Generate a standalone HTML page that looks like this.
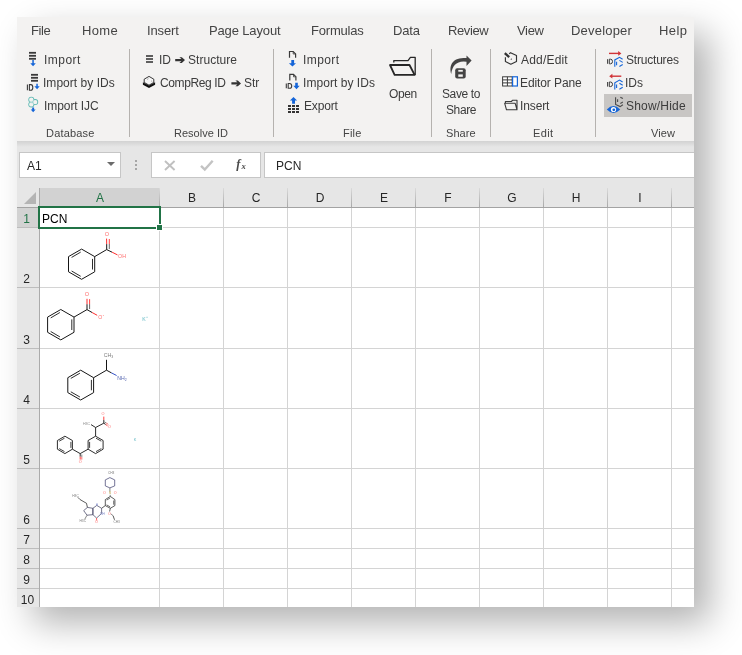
<!DOCTYPE html>
<html><head><meta charset="utf-8">
<style>
html,body{margin:0;padding:0;background:#fff;width:742px;height:655px;overflow:hidden;}
body{position:relative;font-family:"Liberation Sans",sans-serif;}
.t{position:absolute;white-space:pre;font-family:"Liberation Sans",sans-serif;will-change:transform;}
.a{position:absolute;}
</style></head><body>
<div class="a" style="left:17px;top:17px;width:677px;height:590px;background:#fff;box-shadow:16px 16px 34px rgba(0,0,0,0.3);"></div>
<div class="a" style="left:17px;top:17px;width:677px;height:124px;background:#f3f2f1;"></div>
<div class="a" style="left:129px;top:49px;width:1px;height:88px;background:#b5b2af;"></div>
<div class="a" style="left:273px;top:49px;width:1px;height:88px;background:#b5b2af;"></div>
<div class="a" style="left:431px;top:49px;width:1px;height:88px;background:#b5b2af;"></div>
<div class="a" style="left:490px;top:49px;width:1px;height:88px;background:#b5b2af;"></div>
<div class="a" style="left:595px;top:49px;width:1px;height:88px;background:#b5b2af;"></div>
<div class="a" style="left:604px;top:94px;width:88px;height:23px;background:#c8c6c4;"></div>
<div class="a" style="left:17px;top:141px;width:677px;height:66px;background:#e6e6e6;"></div>
<div class="a" style="left:17px;top:141px;width:677px;height:6px;background:linear-gradient(#d2d2d2,#e6e6e6);"></div>
<div class="a" style="left:19px;top:152px;width:101px;height:25px;background:#fff;border:1px solid #c6c6c6;box-sizing:border-box;width:102px;height:26px;"></div>
<div class="a" style="left:107px;top:162px;width:0;height:0;border-left:4px solid transparent;border-right:4px solid transparent;border-top:4px solid #6b6b6b;"></div>
<div class="a" style="left:135px;top:160px;width:2px;height:2px;background:#a6a6a6;"></div>
<div class="a" style="left:135px;top:164px;width:2px;height:2px;background:#a6a6a6;"></div>
<div class="a" style="left:135px;top:168px;width:2px;height:2px;background:#a6a6a6;"></div>
<div class="a" style="left:151px;top:152px;width:110px;height:26px;background:#fff;border:1px solid #c6c6c6;box-sizing:border-box;"></div>
<div class="a" style="left:264px;top:152px;width:430px;height:26px;background:#fff;border:1px solid #c6c6c6;border-right:none;box-sizing:border-box;"></div>
<div class="a" style="left:39px;top:188px;width:121px;height:19px;background:#d2d2d2;"></div>
<div class="a" style="left:17px;top:207px;width:22px;height:400px;background:#e6e6e6;"></div>
<div class="a" style="left:17px;top:207px;width:22px;height:21px;background:#d2d2d2;"></div>
<div class="a" style="left:40px;top:208px;width:654px;height:399px;background:#fff;"></div>
<div class="a" style="left:17px;top:207px;width:677px;height:1px;background:#a3a3a3;"></div>
<div class="a" style="left:39px;top:188px;width:1px;height:419px;background:#ababab;"></div>
<div class="a" style="left:159px;top:188px;width:1px;height:19px;background:linear-gradient(#dadada,#a8a8a8);"></div>
<div class="a" style="left:159px;top:208px;width:1px;height:399px;background:#d4d4d4;"></div>
<div class="a" style="left:223px;top:188px;width:1px;height:19px;background:linear-gradient(#dadada,#a8a8a8);"></div>
<div class="a" style="left:223px;top:208px;width:1px;height:399px;background:#d4d4d4;"></div>
<div class="a" style="left:287px;top:188px;width:1px;height:19px;background:linear-gradient(#dadada,#a8a8a8);"></div>
<div class="a" style="left:287px;top:208px;width:1px;height:399px;background:#d4d4d4;"></div>
<div class="a" style="left:351px;top:188px;width:1px;height:19px;background:linear-gradient(#dadada,#a8a8a8);"></div>
<div class="a" style="left:351px;top:208px;width:1px;height:399px;background:#d4d4d4;"></div>
<div class="a" style="left:415px;top:188px;width:1px;height:19px;background:linear-gradient(#dadada,#a8a8a8);"></div>
<div class="a" style="left:415px;top:208px;width:1px;height:399px;background:#d4d4d4;"></div>
<div class="a" style="left:479px;top:188px;width:1px;height:19px;background:linear-gradient(#dadada,#a8a8a8);"></div>
<div class="a" style="left:479px;top:208px;width:1px;height:399px;background:#d4d4d4;"></div>
<div class="a" style="left:543px;top:188px;width:1px;height:19px;background:linear-gradient(#dadada,#a8a8a8);"></div>
<div class="a" style="left:543px;top:208px;width:1px;height:399px;background:#d4d4d4;"></div>
<div class="a" style="left:607px;top:188px;width:1px;height:19px;background:linear-gradient(#dadada,#a8a8a8);"></div>
<div class="a" style="left:607px;top:208px;width:1px;height:399px;background:#d4d4d4;"></div>
<div class="a" style="left:671px;top:188px;width:1px;height:19px;background:linear-gradient(#dadada,#a8a8a8);"></div>
<div class="a" style="left:671px;top:208px;width:1px;height:399px;background:#d4d4d4;"></div>
<div class="a" style="left:17px;top:227px;width:22px;height:1px;background:#bdbdbd;"></div>
<div class="a" style="left:40px;top:227px;width:654px;height:1px;background:#d4d4d4;"></div>
<div class="a" style="left:17px;top:287px;width:22px;height:1px;background:#bdbdbd;"></div>
<div class="a" style="left:40px;top:287px;width:654px;height:1px;background:#d4d4d4;"></div>
<div class="a" style="left:17px;top:348px;width:22px;height:1px;background:#bdbdbd;"></div>
<div class="a" style="left:40px;top:348px;width:654px;height:1px;background:#d4d4d4;"></div>
<div class="a" style="left:17px;top:408px;width:22px;height:1px;background:#bdbdbd;"></div>
<div class="a" style="left:40px;top:408px;width:654px;height:1px;background:#d4d4d4;"></div>
<div class="a" style="left:17px;top:468px;width:22px;height:1px;background:#bdbdbd;"></div>
<div class="a" style="left:40px;top:468px;width:654px;height:1px;background:#d4d4d4;"></div>
<div class="a" style="left:17px;top:528px;width:22px;height:1px;background:#bdbdbd;"></div>
<div class="a" style="left:40px;top:528px;width:654px;height:1px;background:#d4d4d4;"></div>
<div class="a" style="left:17px;top:548px;width:22px;height:1px;background:#bdbdbd;"></div>
<div class="a" style="left:40px;top:548px;width:654px;height:1px;background:#d4d4d4;"></div>
<div class="a" style="left:17px;top:568px;width:22px;height:1px;background:#bdbdbd;"></div>
<div class="a" style="left:40px;top:568px;width:654px;height:1px;background:#d4d4d4;"></div>
<div class="a" style="left:17px;top:588px;width:22px;height:1px;background:#bdbdbd;"></div>
<div class="a" style="left:40px;top:588px;width:654px;height:1px;background:#d4d4d4;"></div>
<svg class="a" style="left:17px;top:188px" width="22" height="19"><polygon points="7,16 19,16 19,4" fill="#b4b4b4"/></svg>
<div class="a" style="left:38px;top:206px;width:123px;height:2px;background:#217346;"></div>
<div class="a" style="left:38px;top:206px;width:2px;height:23px;background:#217346;"></div>
<div class="a" style="left:159px;top:206px;width:2px;height:18px;background:#217346;"></div>
<div class="a" style="left:38px;top:227px;width:118px;height:2px;background:#217346;"></div>
<div class="a" style="left:157px;top:225px;width:5px;height:5px;background:#217346;border:1px solid #fff;box-sizing:content-box;left:156px;top:224px;"></div>
<div class="t" style="left:40px;top:192px;width:120px;text-align:center;font-size:12px;line-height:12px;color:#217346">A</div>
<div class="t" style="left:160px;top:192px;width:64px;text-align:center;font-size:12px;line-height:12px;color:#262626">B</div>
<div class="t" style="left:224px;top:192px;width:64px;text-align:center;font-size:12px;line-height:12px;color:#262626">C</div>
<div class="t" style="left:288px;top:192px;width:64px;text-align:center;font-size:12px;line-height:12px;color:#262626">D</div>
<div class="t" style="left:352px;top:192px;width:64px;text-align:center;font-size:12px;line-height:12px;color:#262626">E</div>
<div class="t" style="left:416px;top:192px;width:64px;text-align:center;font-size:12px;line-height:12px;color:#262626">F</div>
<div class="t" style="left:480px;top:192px;width:64px;text-align:center;font-size:12px;line-height:12px;color:#262626">G</div>
<div class="t" style="left:544px;top:192px;width:64px;text-align:center;font-size:12px;line-height:12px;color:#262626">H</div>
<div class="t" style="left:608px;top:192px;width:64px;text-align:center;font-size:12px;line-height:12px;color:#262626">I</div>
<div class="t" style="left:16px;top:213px;width:21px;text-align:center;font-size:12px;line-height:12px;color:#217346">1</div>
<div class="t" style="left:16px;top:273px;width:21px;text-align:center;font-size:12px;line-height:12px;color:#262626">2</div>
<div class="t" style="left:16px;top:334px;width:21px;text-align:center;font-size:12px;line-height:12px;color:#262626">3</div>
<div class="t" style="left:16px;top:394px;width:21px;text-align:center;font-size:12px;line-height:12px;color:#262626">4</div>
<div class="t" style="left:16px;top:454px;width:21px;text-align:center;font-size:12px;line-height:12px;color:#262626">5</div>
<div class="t" style="left:16px;top:514px;width:21px;text-align:center;font-size:12px;line-height:12px;color:#262626">6</div>
<div class="t" style="left:16px;top:534px;width:21px;text-align:center;font-size:12px;line-height:12px;color:#262626">7</div>
<div class="t" style="left:16px;top:554px;width:21px;text-align:center;font-size:12px;line-height:12px;color:#262626">8</div>
<div class="t" style="left:16px;top:574px;width:21px;text-align:center;font-size:12px;line-height:12px;color:#262626">9</div>
<div class="t" style="left:17px;top:594px;width:21px;text-align:center;font-size:12px;line-height:12px;color:#262626">10</div>
<div class="t" style="left:30.5px;top:23.8px;font-size:13px;line-height:13px;color:#444444;letter-spacing:-0.4px">File</div>
<div class="t" style="left:82.3px;top:23.8px;font-size:13px;line-height:13px;color:#444444;letter-spacing:0.33px">Home</div>
<div class="t" style="left:146.5px;top:23.8px;font-size:13px;line-height:13px;color:#444444;letter-spacing:-0.12px">Insert</div>
<div class="t" style="left:209.1px;top:23.8px;font-size:13px;line-height:13px;color:#444444;letter-spacing:-0.14px">Page Layout</div>
<div class="t" style="left:311.0px;top:23.8px;font-size:13px;line-height:13px;color:#444444;letter-spacing:-0.19px">Formulas</div>
<div class="t" style="left:392.7px;top:23.8px;font-size:13px;line-height:13px;color:#444444;letter-spacing:-0.13px">Data</div>
<div class="t" style="left:448.2px;top:23.8px;font-size:13px;line-height:13px;color:#444444;letter-spacing:-0.4px">Review</div>
<div class="t" style="left:517.0px;top:23.8px;font-size:13px;line-height:13px;color:#444444;letter-spacing:-0.33px">View</div>
<div class="t" style="left:571.2px;top:23.8px;font-size:13px;line-height:13px;color:#444444;letter-spacing:0.2px">Developer</div>
<div class="t" style="left:658.6px;top:23.8px;font-size:13px;line-height:13px;color:#444444;letter-spacing:0.43px">Help</div>
<div class="t" style="left:43.6px;top:54.0px;font-size:12px;line-height:12px;color:#3c3c3c;letter-spacing:0.46px">Import</div>
<div class="t" style="left:43.1px;top:77.0px;font-size:12px;line-height:12px;color:#3c3c3c;letter-spacing:0.03px">Import by IDs</div>
<div class="t" style="left:43.6px;top:100.0px;font-size:12px;line-height:12px;color:#3c3c3c;letter-spacing:-0.07px">Import IJC</div>
<div class="t" style="left:158.7px;top:54.0px;font-size:12px;line-height:12px;color:#3c3c3c;letter-spacing:0px">ID</div>
<div class="t" style="left:188.1px;top:54.0px;font-size:12px;line-height:12px;color:#3c3c3c;letter-spacing:0.04px">Structure</div>
<div class="t" style="left:160.4px;top:77.0px;font-size:12px;line-height:12px;color:#3c3c3c;letter-spacing:-0.38px">CompReg ID</div>
<div class="t" style="left:243.8px;top:77.0px;font-size:12px;line-height:12px;color:#3c3c3c;letter-spacing:0px">Str</div>
<div class="t" style="left:303.4px;top:54.0px;font-size:12px;line-height:12px;color:#3c3c3c;letter-spacing:0.4px">Import</div>
<div class="t" style="left:303.2px;top:77.0px;font-size:12px;line-height:12px;color:#3c3c3c;letter-spacing:0.05px">Import by IDs</div>
<div class="t" style="left:303.5px;top:100.0px;font-size:12px;line-height:12px;color:#3c3c3c;letter-spacing:-0.16px">Export</div>
<div class="t" style="left:388.6px;top:88.4px;font-size:12px;line-height:12px;color:#3c3c3c;letter-spacing:-0.37px">Open</div>
<div class="t" style="left:441.5px;top:88.4px;font-size:12px;line-height:12px;color:#3c3c3c;letter-spacing:-0.38px">Save to</div>
<div class="t" style="left:446.0px;top:103.8px;font-size:12px;line-height:12px;color:#3c3c3c;letter-spacing:-0.4px">Share</div>
<div class="t" style="left:520.9px;top:54.0px;font-size:12px;line-height:12px;color:#3c3c3c;letter-spacing:0.19px">Add/Edit</div>
<div class="t" style="left:520.2px;top:77.0px;font-size:12px;line-height:12px;color:#3c3c3c;letter-spacing:-0.1px">Editor Pane</div>
<div class="t" style="left:520.4px;top:100.0px;font-size:12px;line-height:12px;color:#3c3c3c;letter-spacing:-0.12px">Insert</div>
<div class="t" style="left:625.5px;top:54.0px;font-size:12px;line-height:12px;color:#3c3c3c;letter-spacing:-0.2px">Structures</div>
<div class="t" style="left:624.7px;top:77.0px;font-size:12px;line-height:12px;color:#3c3c3c;letter-spacing:0px">IDs</div>
<div class="t" style="left:625.7px;top:100.0px;font-size:12px;line-height:12px;color:#3c3c3c;letter-spacing:0.2px">Show/Hide</div>
<div class="t" style="left:46.4px;top:128.0px;font-size:11px;line-height:11px;color:#444444;letter-spacing:0.19px">Database</div>
<div class="t" style="left:173.9px;top:128.0px;font-size:11px;line-height:11px;color:#444444;letter-spacing:0.02px">Resolve ID</div>
<div class="t" style="left:342.6px;top:128.0px;font-size:11px;line-height:11px;color:#444444;letter-spacing:0.23px">File</div>
<div class="t" style="left:445.6px;top:128.0px;font-size:11px;line-height:11px;color:#444444;letter-spacing:0.05px">Share</div>
<div class="t" style="left:532.5px;top:128.0px;font-size:11px;line-height:11px;color:#444444;letter-spacing:0.37px">Edit</div>
<div class="t" style="left:650.6px;top:128.0px;font-size:11px;line-height:11px;color:#444444;letter-spacing:0.13px">View</div>
<div class="t" style="left:26.8px;top:159.9px;font-size:12px;line-height:12px;color:#262626;letter-spacing:0px">A1</div>
<div class="t" style="left:276.0px;top:159.8px;font-size:12px;line-height:12px;color:#262626;letter-spacing:0px">PCN</div>
<div class="t" style="left:42.0px;top:212.9px;font-size:12px;line-height:12px;color:#000000;letter-spacing:0px">PCN</div>

<svg class="a" style="left:0;top:0" width="742" height="655" viewBox="0 0 742 655">
<g id="ribbon-icons">
 <!-- DB Import -->
 <g fill="#3a3a3a"><rect x="29" y="51.9" width="7" height="1.8"/><rect x="29" y="54.9" width="7" height="1.8"/><rect x="29" y="57.9" width="7" height="1.8"/></g>
 <path d="M32.3,60 h1.5 v3.3 h2 l-2.75,3 l-2.75,-3 h2z" fill="#1565d8"/>
 <!-- DB Import by IDs -->
 <g fill="#3a3a3a"><rect x="31" y="73.9" width="7" height="1.8"/><rect x="31" y="76.9" width="7" height="1.8"/><rect x="31" y="79.9" width="7" height="1.8"/></g>
 <g fill="none" stroke="#3a3a3a" stroke-width="1.1"><path d="M27.4,84.6 v5.6"/><path d="M29.4,84.6 h1.4 q2,0 2,2.8 q0,2.8 -2,2.8 h-1.4z"/></g>
 <path d="M36.3,83.8 h1.5 v2.5 h1.9 l-2.65,3 l-2.65,-3 h1.9z" fill="#1565d8"/>
 <!-- IJC -->
 <g fill="#5cb8b2"><circle cx="31.3" cy="99.8" r="3"/><circle cx="31.3" cy="104.4" r="3"/><circle cx="35.2" cy="102.1" r="3"/></g>
 <g fill="#f3f2f1"><circle cx="31.3" cy="99.8" r="2.2"/><circle cx="31.3" cy="104.4" r="2.2"/><circle cx="35.2" cy="102.1" r="2.2"/></g>
 <path d="M29.8,102.1 h4 M32.2,100.6 v3" stroke="#a8d8d4" stroke-width="0.7"/>
 <path d="M32.2,107.6 h1.9 v2 h1.5 l-2.45,2.6 l-2.45,-2.6 h1.5z" fill="#1565d8"/>
 <path d="M175.2,59.050000000000004 H181.4 L179.4,57.2 H181.8 L185,60.1 L181.8,63.0 H179.4 L181.4,61.15 H175.2 Z" fill="#333"/>
 <path d="M231.4,82.35000000000001 H237.4 L235.4,80.5 H237.8 L241,83.4 L237.8,86.30000000000001 H235.4 L237.4,84.45 H231.4 Z" fill="#333"/>
 <!-- Resolve ID: list -->
 <g fill="#3a3a3a"><rect x="146" y="55.2" width="7" height="1.6"/><rect x="146" y="58.2" width="7" height="1.6"/><rect x="146" y="61.2" width="7" height="1.6"/></g>
 <!-- CompReg -->
 <path d="M149,76.4 L153.8,79.2 V82.4 L149,85.2 L144.2,82.4 V79.2 Z" fill="#f6f6f6" stroke="#222" stroke-width="0.9"/>
 <path d="M147,79.5 l1.5,-0.9 M151,80.8 l1.2,0.7" stroke="#777" stroke-width="0.6"/>
 <path d="M142.9,82.2 L149,85.6 L155.1,82.2 V84.8 L149,88.1 L142.9,84.8 Z" fill="#111"/>
 <!-- File Import -->
 <path d="M289.5,57.8 V51.5 H293.2 L295.6,53.9 V57.8" fill="none" stroke="#3a3a3a" stroke-width="1.2"/>
 <path d="M293.2,51.5 V54 H295.6" fill="none" stroke="#3a3a3a" stroke-width="0.8"/>
 <path d="M291.3,60 h2.8 v3.2 h1.9 l-3.55,3.3 l-3.55,-3.3 h2.4z" fill="#1565d8"/>
 <!-- File Import by IDs -->
 <path d="M289.8,80.6 V74.3 H293.5 L295.9,76.7 V80.6" fill="none" stroke="#3a3a3a" stroke-width="1.2"/>
 <path d="M293.5,74.3 V76.8 H295.9" fill="none" stroke="#3a3a3a" stroke-width="0.8"/>
 <g fill="none" stroke="#3a3a3a" stroke-width="1.1"><path d="M286.3,83.5 v4.8"/><path d="M288.2,83.5 h1.3 q2.2,0 2.2,2.4 q0,2.4 -2.2,2.4 h-1.3z"/></g>
 <path d="M295.2,82.8 h2.6 v3 h1.9 l-3.2,3.4 l-3.2,-3.4 h1.9z" fill="#1565d8"/>
 <!-- Export -->
 <path d="M293.5,96.9 l3.6,3.7 h-2.1 v3.2 h-2.9 v-3.2 h-2.2z" fill="#1565d8"/>
 <g fill="#333">
  <rect x="288" y="105" width="3" height="2"/><rect x="292" y="105" width="3" height="2"/><rect x="296" y="105" width="3" height="2"/>
  <rect x="288" y="108" width="3" height="2"/><rect x="292" y="108" width="3" height="2"/><rect x="296" y="108" width="3" height="2"/>
  <rect x="288" y="111" width="3" height="2"/><rect x="292" y="111" width="3" height="2"/><rect x="296" y="111" width="3" height="2"/>
 </g>
 <!-- Open folder -->
 <g fill="none" stroke="#262626" stroke-linejoin="round">
  <path d="M393.8,62.6 V60.6 H408 L410.4,57.4 H415.2 V75" stroke-width="1.3"/>
  <path d="M390,65 H409.5 L414.6,74.9 H394.6z" stroke-width="1.8"/>
 </g>
 <!-- Save to Share -->
 <path d="M451.2,74 C449,66.5 451.5,58.3 463.5,58.1 L466.5,58.1 L466.5,55.6 L471.6,60.6 L466.5,66.1 L466.5,61.7 L463.5,61.6 C456,61.9 452.3,66 451.2,74 Z" fill="#444"/>
 <rect x="455.2" y="68.3" width="10.5" height="10.3" rx="2" fill="#444"/>
 <rect x="458.3" y="69.9" width="4.5" height="1.8" fill="#f3f2f1"/>
 <rect x="458.3" y="74.4" width="4.5" height="2.4" fill="#f3f2f1"/>
 <!-- Add/Edit -->
 <path d="M509.2,53.7 L510.6,52.7 L516.5,55.5 V61.6 L510.8,64.2 L505.4,61.6 V57.3" fill="none" stroke="#333" stroke-width="1.15" stroke-linejoin="round"/>
 <path d="M504.8,53.2 L509.2,57.2" stroke="#333" stroke-width="2.3"/>
 <path d="M510.5,59.7 L511.3,58 L512.1,59.7 Z" fill="#555"/>
 <!-- Editor Pane -->
 <rect x="502.6" y="76.8" width="9.6" height="9.2" fill="#fff" stroke="#3a3a3a" stroke-width="1"/>
 <path d="M502.6,79.9 h9.6 M502.6,82.9 h9.6 M507.4,76.8 v9.2" stroke="#3a3a3a" stroke-width="1"/>
 <rect x="512.6" y="76.8" width="4.8" height="9.2" fill="#fff" stroke="#1565d8" stroke-width="1.2"/>
 <!-- Insert (folder) -->
 <path d="M505.4,103.3 v-1.8 h6 l1.3,-1.3 h4.3 v9.6 h-10.5 l-1.8,-6.5 h10.5 l1.8,6.5" fill="none" stroke="#3a3a3a" stroke-width="1.1" stroke-linejoin="round"/>
 <!-- Structures -->
 <path d="M609,53.4 H619" stroke="#d13438" stroke-width="1.4"/>
 <path d="M618.2,51 L621.4,53.4 L618.2,55.8z" fill="#d13438"/>
 <g fill="none" stroke="#3a3a3a" stroke-width="1"><path d="M607.6,59.2 v4.6"/><path d="M609.3,59.2 h1.2 q2,0 2,2.3 q0,2.3 -2,2.3 h-1.2z"/></g>
 <g fill="none" stroke="#1565d8" stroke-width="1.1">
  <path d="M614.8,66.8 V59.9 L619.5,57.3 L622.6,59.2"/><path d="M616.6,61.8 v3.4"/><path d="M619.4,60.4 l3.3,2"/><path d="M619.4,66.4 l3.3,-1.9"/>
 </g>
 <!-- IDs -->
 <path d="M612,76.2 H621.3" stroke="#d13438" stroke-width="1.4"/>
 <path d="M612.4,73.8 L609.2,76.2 L612.4,78.6z" fill="#d13438"/>
 <g fill="none" stroke="#3a3a3a" stroke-width="1"><path d="M607.6,82 v4.6"/><path d="M609.3,82 h1.2 q2,0 2,2.3 q0,2.3 -2,2.3 h-1.2z"/></g>
 <g fill="none" stroke="#1565d8" stroke-width="1.1">
  <path d="M614.8,89.6 V82.7 L619.5,80.1 L622.6,82"/><path d="M616.6,84.6 v3.4"/><path d="M619.4,83.2 l3.3,2"/><path d="M619.4,89.2 l3.3,-1.9"/>
 </g>
 <!-- Show/Hide -->
 <g fill="none" stroke="#4a4a4a" stroke-width="1.1">
  <path d="M615.6,97.2 V104.4 L620.1,106.6 L622.9,104.8"/><path d="M617.6,99.2 v2.8"/><path d="M620.3,97.3 l2.6,1.3"/><path d="M620.3,103.4 l2.6,-1.3"/>
 </g>
 <path d="M606.8,109.5 Q613.5,102.6 620.2,109.5 Q613.5,116.4 606.8,109.5z" fill="#1565d8"/>
 <circle cx="613.5" cy="109.5" r="2.6" fill="#fff"/>
 <circle cx="613.8" cy="109.8" r="1.4" fill="#1565d8"/>
</g>
<g id="fbar">
 <text x="236.2" y="168.4" font-family="Liberation Serif" font-style="italic" font-weight="bold" font-size="12.5" fill="#4a4a4a">f</text>
 <text x="241.6" y="168.8" font-family="Liberation Serif" font-style="italic" font-weight="bold" font-size="8.6" fill="#4a4a4a">x</text>
 <path d="M165,161 l9.6,9 M174.6,161 l-9.6,9" stroke="#c0c0c0" stroke-width="1.9"/>
 <path d="M201,165.8 l3.8,3.8 l7.9,-8.8" fill="none" stroke="#c3c3c3" stroke-width="2.4"/>
</g>
</svg>
<svg class="a" style="left:0;top:0" width="742" height="655"><line x1="81.6" y1="249.1" x2="94.7" y2="256.6" stroke="#151515" stroke-width="1.0"/><line x1="94.7" y1="256.6" x2="94.7" y2="271.8" stroke="#151515" stroke-width="1.0"/><line x1="94.7" y1="271.8" x2="81.6" y2="279.3" stroke="#151515" stroke-width="1.0"/><line x1="81.6" y1="279.3" x2="68.5" y2="271.8" stroke="#151515" stroke-width="1.0"/><line x1="68.5" y1="271.8" x2="68.5" y2="256.6" stroke="#151515" stroke-width="1.0"/><line x1="68.5" y1="256.6" x2="81.6" y2="249.1" stroke="#151515" stroke-width="1.0"/><line x1="71.6" y1="257.4" x2="80.7" y2="252.1" stroke="#151515" stroke-width="0.9"/><line x1="92.5" y1="258.9" x2="92.5" y2="269.5" stroke="#151515" stroke-width="0.9"/><line x1="80.7" y1="276.3" x2="71.6" y2="271.0" stroke="#151515" stroke-width="0.9"/><line x1="94.7" y1="256.6" x2="106.7" y2="249.6" stroke="#151515" stroke-width="1.0"/><line x1="106.7" y1="249.6" x2="106.7" y2="244.1" stroke="#151515" stroke-width="1.0"/><line x1="106.7" y1="244.1" x2="106.6" y2="238.6" stroke="#ff2a2a" stroke-width="1.0"/><line x1="109.3" y1="249.0" x2="109.3" y2="244.0" stroke="#555" stroke-width="0.9"/><line x1="109.3" y1="244.0" x2="109.3" y2="239.0" stroke="#ff2a2a" stroke-width="0.9"/><line x1="106.7" y1="249.6" x2="112.1" y2="252.2" stroke="#151515" stroke-width="1.0"/><line x1="112.1" y1="252.2" x2="117.5" y2="254.9" stroke="#ff2a2a" stroke-width="1.0"/><text x="107.0" y="236.0" font-family="Liberation Sans" font-size="5.5" fill="#ff6b6b" text-anchor="middle">O</text><text x="122.0" y="258.3" font-family="Liberation Sans" font-size="5.2" fill="#ff6b6b" text-anchor="middle">OH</text><line x1="60.8" y1="309.5" x2="74.0" y2="317.1" stroke="#151515" stroke-width="1.0"/><line x1="74.0" y1="317.1" x2="74.0" y2="332.3" stroke="#151515" stroke-width="1.0"/><line x1="74.0" y1="332.3" x2="60.8" y2="339.9" stroke="#151515" stroke-width="1.0"/><line x1="60.8" y1="339.9" x2="47.6" y2="332.3" stroke="#151515" stroke-width="1.0"/><line x1="47.6" y1="332.3" x2="47.6" y2="317.1" stroke="#151515" stroke-width="1.0"/><line x1="47.6" y1="317.1" x2="60.8" y2="309.5" stroke="#151515" stroke-width="1.0"/><line x1="50.7" y1="317.9" x2="59.9" y2="312.5" stroke="#151515" stroke-width="0.9"/><line x1="71.8" y1="319.4" x2="71.8" y2="330.0" stroke="#151515" stroke-width="0.9"/><line x1="59.9" y1="336.9" x2="50.7" y2="331.5" stroke="#151515" stroke-width="0.9"/><line x1="74.0" y1="317.1" x2="87.0" y2="309.6" stroke="#151515" stroke-width="1.0"/><line x1="87.0" y1="309.6" x2="87.0" y2="304.2" stroke="#151515" stroke-width="1.0"/><line x1="87.0" y1="304.2" x2="87.0" y2="298.8" stroke="#ff2a2a" stroke-width="1.0"/><line x1="89.6" y1="309.0" x2="89.6" y2="304.1" stroke="#555" stroke-width="0.9"/><line x1="89.6" y1="304.1" x2="89.6" y2="299.2" stroke="#ff2a2a" stroke-width="0.9"/><line x1="87.0" y1="309.6" x2="92.1" y2="312.5" stroke="#151515" stroke-width="1.0"/><line x1="92.1" y1="312.5" x2="97.2" y2="315.3" stroke="#ff2a2a" stroke-width="1.0"/><text x="87.0" y="296.0" font-family="Liberation Sans" font-size="5.5" fill="#ff6b6b" text-anchor="middle">O</text><text x="100.2" y="319.0" font-family="Liberation Sans" font-size="5.2" fill="#ff6b6b" text-anchor="middle">O</text><text x="103.5" y="316.0" font-family="Liberation Sans" font-size="4" fill="#ff6b6b" text-anchor="middle">-</text><text x="144.0" y="320.5" font-family="Liberation Sans" font-size="5.2" fill="#63b9c4" text-anchor="middle">K</text><text x="147.0" y="317.5" font-family="Liberation Sans" font-size="3.5" fill="#63b9c4" text-anchor="middle">+</text><line x1="80.7" y1="370.2" x2="93.6" y2="377.7" stroke="#151515" stroke-width="1.0"/><line x1="93.6" y1="377.7" x2="93.6" y2="392.6" stroke="#151515" stroke-width="1.0"/><line x1="93.6" y1="392.6" x2="80.7" y2="400.0" stroke="#151515" stroke-width="1.0"/><line x1="80.7" y1="400.0" x2="67.8" y2="392.6" stroke="#151515" stroke-width="1.0"/><line x1="67.8" y1="392.6" x2="67.8" y2="377.7" stroke="#151515" stroke-width="1.0"/><line x1="67.8" y1="377.7" x2="80.7" y2="370.2" stroke="#151515" stroke-width="1.0"/><line x1="70.8" y1="378.4" x2="79.9" y2="373.2" stroke="#151515" stroke-width="0.9"/><line x1="91.4" y1="379.9" x2="91.4" y2="390.3" stroke="#151515" stroke-width="0.9"/><line x1="79.9" y1="397.0" x2="70.8" y2="391.8" stroke="#151515" stroke-width="0.9"/><line x1="93.6" y1="377.7" x2="106.5" y2="370.2" stroke="#151515" stroke-width="1.0"/><line x1="106.5" y1="370.2" x2="106.5" y2="359.8" stroke="#151515" stroke-width="1.0"/><line x1="106.5" y1="370.2" x2="111.5" y2="372.9" stroke="#151515" stroke-width="1.0"/><line x1="111.5" y1="372.9" x2="116.6" y2="375.5" stroke="#3050c8" stroke-width="1.0"/><text x="108.5" y="357.0" font-family="Liberation Sans" font-size="5.2" fill="#7a7a7a" text-anchor="middle">CH<tspan font-size="3.5" dy="1">3</tspan></text><text x="122.0" y="380.0" font-family="Liberation Sans" font-size="5.2" fill="#5666b0" text-anchor="middle">NH<tspan font-size="3.5" dy="1">2</tspan></text><line x1="64.9" y1="436.2" x2="72.4" y2="440.5" stroke="#151515" stroke-width="0.9"/><line x1="72.4" y1="440.5" x2="72.4" y2="449.2" stroke="#151515" stroke-width="0.9"/><line x1="72.4" y1="449.2" x2="64.9" y2="453.6" stroke="#151515" stroke-width="0.9"/><line x1="64.9" y1="453.6" x2="57.4" y2="449.2" stroke="#151515" stroke-width="0.9"/><line x1="57.4" y1="449.2" x2="57.4" y2="440.5" stroke="#151515" stroke-width="0.9"/><line x1="57.4" y1="440.5" x2="64.9" y2="436.2" stroke="#151515" stroke-width="0.9"/><line x1="59.2" y1="441.2" x2="64.5" y2="438.2" stroke="#151515" stroke-width="0.81"/><line x1="70.9" y1="441.9" x2="70.9" y2="447.9" stroke="#151515" stroke-width="0.81"/><line x1="64.5" y1="451.6" x2="59.2" y2="448.6" stroke="#151515" stroke-width="0.81"/><line x1="95.6" y1="436.2" x2="103.1" y2="440.5" stroke="#151515" stroke-width="0.9"/><line x1="103.1" y1="440.5" x2="103.1" y2="449.2" stroke="#151515" stroke-width="0.9"/><line x1="103.1" y1="449.2" x2="95.6" y2="453.6" stroke="#151515" stroke-width="0.9"/><line x1="95.6" y1="453.6" x2="88.1" y2="449.2" stroke="#151515" stroke-width="0.9"/><line x1="88.1" y1="449.2" x2="88.1" y2="440.5" stroke="#151515" stroke-width="0.9"/><line x1="88.1" y1="440.5" x2="95.6" y2="436.2" stroke="#151515" stroke-width="0.9"/><line x1="96.0" y1="438.2" x2="101.3" y2="441.2" stroke="#151515" stroke-width="0.81"/><line x1="101.3" y1="448.6" x2="96.0" y2="451.6" stroke="#151515" stroke-width="0.81"/><line x1="89.6" y1="447.9" x2="89.6" y2="441.9" stroke="#151515" stroke-width="0.81"/><line x1="72.4" y1="449.2" x2="80.2" y2="453.6" stroke="#151515" stroke-width="0.9"/><line x1="80.2" y1="453.6" x2="88.1" y2="449.2" stroke="#151515" stroke-width="0.9"/><line x1="80.2" y1="453.6" x2="80.2" y2="456.6" stroke="#151515" stroke-width="0.9"/><line x1="80.2" y1="456.6" x2="80.2" y2="459.6" stroke="#ff2a2a" stroke-width="0.9"/><line x1="81.8" y1="454.5" x2="81.8" y2="457.1" stroke="#555" stroke-width="0.7"/><line x1="81.8" y1="457.1" x2="81.8" y2="459.6" stroke="#ff2a2a" stroke-width="0.7"/><text x="80.2" y="462.5" font-family="Liberation Sans" font-size="3.8" fill="#ff6b6b" text-anchor="middle">O</text><line x1="95.6" y1="436.2" x2="95.6" y2="427.5" stroke="#151515" stroke-width="0.9"/><line x1="95.6" y1="427.5" x2="91.0" y2="424.6" stroke="#151515" stroke-width="0.9"/><text x="86.5" y="424.5" font-family="Liberation Sans" font-size="3.6" fill="#8a8a8a" text-anchor="middle">H3C</text><line x1="95.6" y1="427.5" x2="103.8" y2="423.2" stroke="#151515" stroke-width="0.9"/><line x1="103.8" y1="423.2" x2="105.7" y2="424.5" stroke="#151515" stroke-width="0.9"/><line x1="105.7" y1="424.5" x2="107.5" y2="425.8" stroke="#ff2a2a" stroke-width="0.9"/><line x1="104.6" y1="421.9" x2="106.4" y2="423.1" stroke="#555" stroke-width="0.7"/><line x1="106.4" y1="423.1" x2="108.3" y2="424.4" stroke="#ff2a2a" stroke-width="0.7"/><line x1="103.8" y1="423.2" x2="103.8" y2="419.9" stroke="#151515" stroke-width="0.9"/><line x1="103.8" y1="419.9" x2="103.8" y2="416.6" stroke="#ff2a2a" stroke-width="0.9"/><text x="109.5" y="427.5" font-family="Liberation Sans" font-size="3.8" fill="#ff6b6b" text-anchor="middle">O</text><text x="102.9" y="414.8" font-family="Liberation Sans" font-size="3.8" fill="#ff6b6b" text-anchor="middle">O</text><text x="135.0" y="440.8" font-family="Liberation Sans" font-size="3.8" fill="#63b9c4" text-anchor="middle">K</text><line x1="109.9" y1="477.6" x2="105.3" y2="479.9" stroke="#3a3a6a" stroke-width="0.7"/><line x1="105.3" y1="479.9" x2="105.3" y2="485.9" stroke="#3a3a6a" stroke-width="0.7"/><line x1="105.3" y1="485.9" x2="109.9" y2="487.9" stroke="#3a3a6a" stroke-width="0.7"/><line x1="109.9" y1="487.9" x2="114.7" y2="485.9" stroke="#3a3a6a" stroke-width="0.7"/><line x1="114.7" y1="485.9" x2="114.7" y2="479.9" stroke="#3a3a6a" stroke-width="0.7"/><line x1="114.7" y1="479.9" x2="109.9" y2="477.6" stroke="#3a3a6a" stroke-width="0.7"/><text x="111.2" y="474.2" font-family="Liberation Sans" font-size="3.2" fill="#7a7a7a" text-anchor="middle">CH3</text><line x1="109.9" y1="487.9" x2="109.9" y2="491.5" stroke="#555" stroke-width="0.7"/><text x="109.9" y="494.3" font-family="Liberation Sans" font-size="3.6" fill="#b8a040" text-anchor="middle">S</text><text x="104.4" y="494.3" font-family="Liberation Sans" font-size="3.6" fill="#ff6b6b" text-anchor="middle">O</text><text x="115.1" y="494.3" font-family="Liberation Sans" font-size="3.6" fill="#ff6b6b" text-anchor="middle">O</text><line x1="110.3" y1="496.4" x2="114.9" y2="499.6" stroke="#151515" stroke-width="0.7"/><line x1="114.9" y1="499.6" x2="114.9" y2="505.6" stroke="#151515" stroke-width="0.7"/><line x1="114.9" y1="505.6" x2="110.3" y2="508.3" stroke="#151515" stroke-width="0.7"/><line x1="110.3" y1="508.3" x2="105.3" y2="505.6" stroke="#151515" stroke-width="0.7"/><line x1="105.3" y1="505.6" x2="105.3" y2="499.6" stroke="#151515" stroke-width="0.7"/><line x1="105.3" y1="499.6" x2="110.3" y2="496.4" stroke="#151515" stroke-width="0.7"/><line x1="113.7" y1="500.5" x2="113.7" y2="504.7" stroke="#151515" stroke-width="0.63"/><line x1="110.1" y1="506.8" x2="106.6" y2="504.9" stroke="#151515" stroke-width="0.63"/><line x1="106.7" y1="500.1" x2="110.2" y2="497.9" stroke="#151515" stroke-width="0.63"/><line x1="110.1" y1="494.8" x2="110.3" y2="496.4" stroke="#555" stroke-width="0.7"/><line x1="110.3" y1="508.3" x2="109.6" y2="511.5" stroke="#151515" stroke-width="0.7"/><text x="109.4" y="514.6" font-family="Liberation Sans" font-size="3.6" fill="#ff6b6b" text-anchor="middle">O</text><line x1="110.8" y1="513.8" x2="113.1" y2="515.7" stroke="#555" stroke-width="0.7"/><line x1="113.1" y1="515.7" x2="114.5" y2="519.8" stroke="#151515" stroke-width="0.7"/><text x="116.7" y="522.8" font-family="Liberation Sans" font-size="3.2" fill="#7a7a7a" text-anchor="middle">CH3</text><line x1="105.3" y1="505.6" x2="101.6" y2="508.3" stroke="#151515" stroke-width="0.7"/><line x1="101.6" y1="508.3" x2="96.8" y2="505.4" stroke="#3a3a5a" stroke-width="0.7"/><line x1="96.8" y1="505.4" x2="92.9" y2="508.3" stroke="#3a3a5a" stroke-width="0.7"/><line x1="92.9" y1="508.3" x2="92.9" y2="514.7" stroke="#3a3a5a" stroke-width="0.7"/><line x1="92.9" y1="514.7" x2="96.6" y2="518.0" stroke="#3a3a5a" stroke-width="0.7"/><line x1="96.6" y1="518.0" x2="101.6" y2="513.4" stroke="#3a3a5a" stroke-width="0.7"/><line x1="101.6" y1="513.4" x2="101.6" y2="508.3" stroke="#3a3a5a" stroke-width="0.7"/><line x1="96.6" y1="518.0" x2="96.6" y2="520.5" stroke="#ff2a2a" stroke-width="0.7"/><text x="96.6" y="523.0" font-family="Liberation Sans" font-size="3.8" fill="#ff6b6b" text-anchor="middle">O</text><text x="97.0" y="505.5" font-family="Liberation Sans" font-size="3.2" fill="#7d88c8" text-anchor="middle">H</text><text x="102.5" y="515.0" font-family="Liberation Sans" font-size="3.2" fill="#7d88c8" text-anchor="middle">NH</text><line x1="92.9" y1="508.3" x2="87.4" y2="507.4" stroke="#3a3a5a" stroke-width="0.7"/><line x1="87.4" y1="507.4" x2="83.7" y2="510.6" stroke="#3a3a5a" stroke-width="0.7"/><line x1="83.7" y1="510.6" x2="87.0" y2="515.2" stroke="#3a3a5a" stroke-width="0.7"/><line x1="87.0" y1="515.2" x2="92.9" y2="514.7" stroke="#3a3a5a" stroke-width="0.7"/><line x1="92.9" y1="514.7" x2="92.9" y2="508.3" stroke="#3a3a5a" stroke-width="0.7"/><line x1="87.4" y1="507.4" x2="86.5" y2="503.3" stroke="#151515" stroke-width="0.7"/><line x1="86.5" y1="503.3" x2="80.1" y2="499.6" stroke="#151515" stroke-width="0.7"/><line x1="80.1" y1="499.6" x2="77.8" y2="497.3" stroke="#151515" stroke-width="0.7"/><text x="75.5" y="497.3" font-family="Liberation Sans" font-size="3.3" fill="#7a7a7a" text-anchor="middle">H3C</text><line x1="87.0" y1="515.2" x2="84.7" y2="519.3" stroke="#555" stroke-width="0.7"/><text x="82.8" y="521.8" font-family="Liberation Sans" font-size="3.3" fill="#7a7a7a" text-anchor="middle">H3C</text></svg>
</body></html>
